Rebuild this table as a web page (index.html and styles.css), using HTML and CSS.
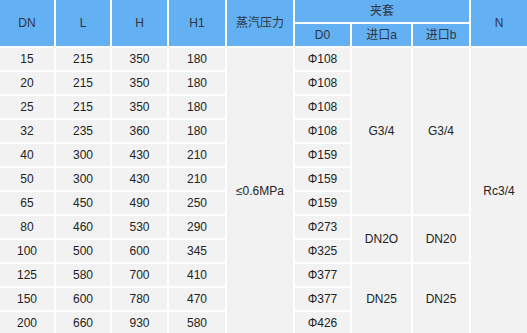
FILE: index.html
```html
<!DOCTYPE html>
<html lang="zh-CN">
<head>
<meta charset="utf-8">
<title>参数表</title>
<link rel="stylesheet" href="styles.css">
</head>
<body>
<table class="spec">
  <colgroup>
    <col class="c-dn"><col class="c-l"><col class="c-h"><col class="c-h1"><col class="c-p">
    <col class="c-d0"><col class="c-a"><col class="c-b"><col class="c-n">
  </colgroup>
  <thead>
    <tr>
      <th rowspan="2">DN</th>
      <th rowspan="2">L</th>
      <th rowspan="2">H</th>
      <th rowspan="2">H1</th>
      <th rowspan="2">蒸汽压力</th>
      <th colspan="3">夹套</th>
      <th rowspan="2">N</th>
    </tr>
    <tr>
      <th>D0</th>
      <th>进口a</th>
      <th>进口b</th>
    </tr>
  </thead>
  <tbody>
    <tr><td>15</td><td>215</td><td>350</td><td>180</td><td rowspan="12">≤0.6MPa</td><td>Φ108</td><td rowspan="7">G3/4</td><td rowspan="7">G3/4</td><td rowspan="12">Rc3/4</td></tr>
    <tr><td>20</td><td>215</td><td>350</td><td>180</td><td>Φ108</td></tr>
    <tr><td>25</td><td>215</td><td>350</td><td>180</td><td>Φ108</td></tr>
    <tr><td>32</td><td>235</td><td>360</td><td>180</td><td>Φ108</td></tr>
    <tr><td>40</td><td>300</td><td>430</td><td>210</td><td>Φ159</td></tr>
    <tr><td>50</td><td>300</td><td>430</td><td>210</td><td>Φ159</td></tr>
    <tr><td>65</td><td>450</td><td>490</td><td>250</td><td>Φ159</td></tr>
    <tr><td>80</td><td>460</td><td>530</td><td>290</td><td>Φ273</td><td rowspan="2">DN2O</td><td rowspan="2">DN20</td></tr>
    <tr><td>100</td><td>500</td><td>600</td><td>345</td><td>Φ325</td></tr>
    <tr><td>125</td><td>580</td><td>700</td><td>410</td><td>Φ377</td><td rowspan="3">DN25</td><td rowspan="3">DN25</td></tr>
    <tr><td>150</td><td>600</td><td>780</td><td>470</td><td>Φ377</td></tr>
    <tr><td>200</td><td>660</td><td>930</td><td>580</td><td>Φ426</td></tr>
  </tbody>
</table>
</body>
</html>
```

FILE: styles.css
```css
html, body {
  margin: 0;
  padding: 0;
  background: #ffffff;
  overflow: hidden;
}

.spec {
  margin: -2px;
  width: 531px;
  table-layout: fixed;
  border-collapse: separate;
  border-spacing: 2px;
  font-family: "Liberation Sans", Arial, "Noto Sans CJK SC", sans-serif;
  font-size: 12px;
  color: #333333;
}

.c-dn { width: 54px; }
.c-l { width: 54px; }
.c-h { width: 55px; }
.c-h1 { width: 56px; }
.c-p { width: 66px; }
.c-d0 { width: 55px; }
.c-a { width: 59px; }
.c-b { width: 56px; }
.c-n { width: 56px; }

.spec th,
.spec td {
  height: 22px;
  padding: 0;
  text-align: center;
  vertical-align: middle;
  font-weight: normal;
  line-height: 14px;
  white-space: nowrap;
}

.spec th {
  background: #63b0f2;
  color: #2f3640;
}

.spec td {
  background: #f2f2f2;
  color: #222222;
}
```
